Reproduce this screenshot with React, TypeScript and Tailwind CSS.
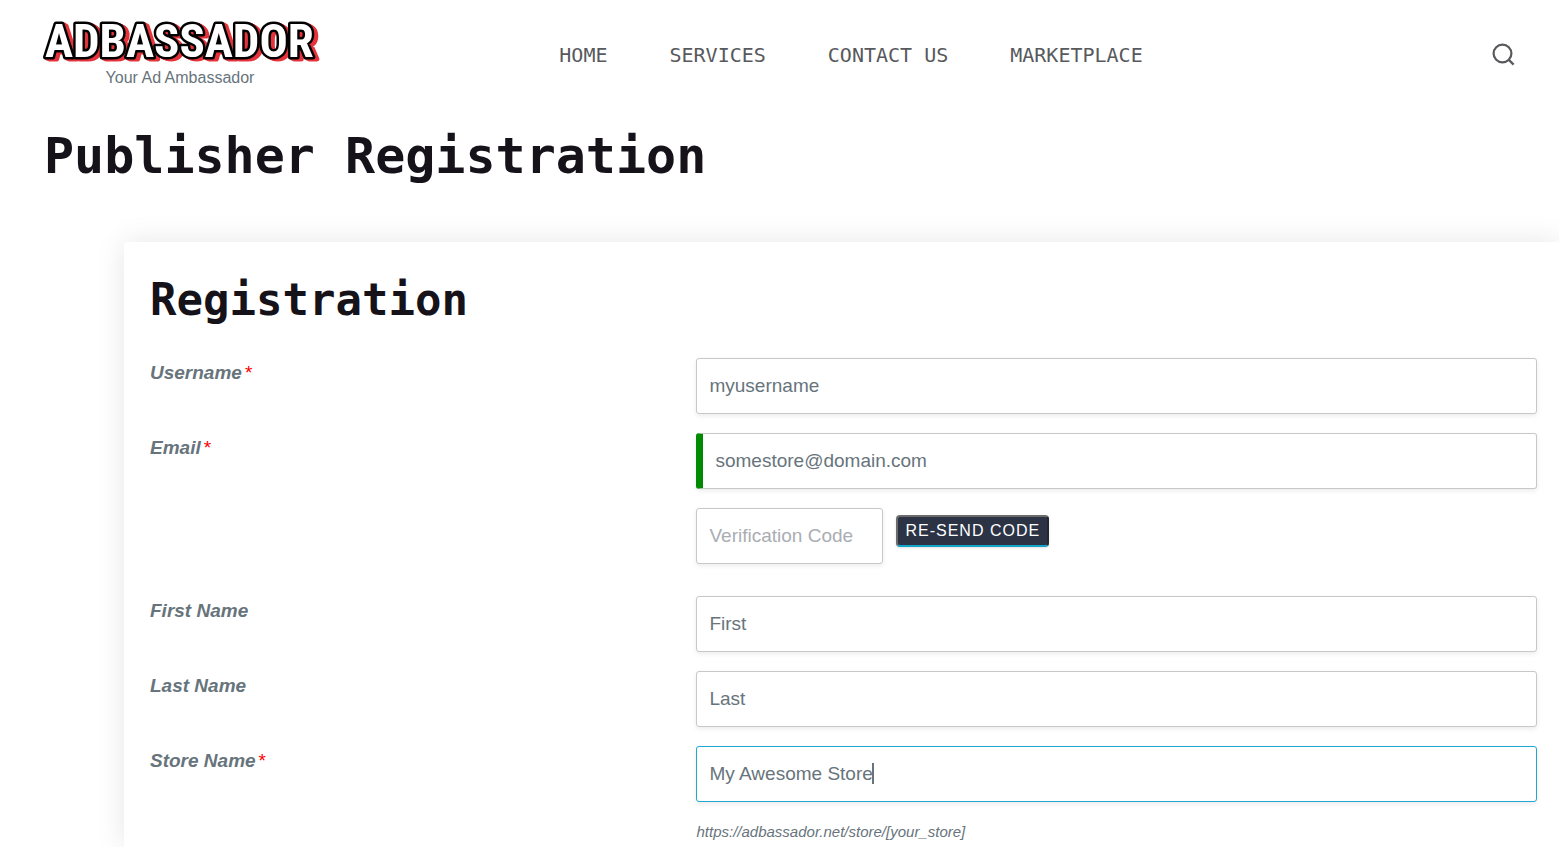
import React from "react";

const navLinks = ["HOME", "SERVICES", "CONTACT US", "MARKETPLACE"];

const inputClass =
  "block h-14 w-full rounded-[3px] border bg-white px-3 text-[19px] leading-6 text-[#67747c] shadow-[0_2px_5px_rgba(0,0,0,0.08)] outline-none placeholder:text-[#a9adb3]";

interface FieldRowProps {
  id: string;
  label: string;
  required?: boolean;
  children: React.ReactNode;
}

const FieldRow: React.FC<FieldRowProps> = ({ id, label, required, children }) => (
  <div className="grid grid-cols-[39.4%_1fr]">
    <label htmlFor={id} className="pt-[3px] text-[19px] leading-6">
      <span className="font-bold italic">{label}</span>
      {required && <span className="pl-[3px] text-[#ff0000]">*</span>}
    </label>
    <div>{children}</div>
  </div>
);

const Logo = () => (
  <a href="#" className="flex flex-col items-center">
    <svg
      width="274"
      height="54"
      viewBox="0 0 274 54"
      role="img"
      aria-label="Adbassador"
      className="overflow-visible [filter:drop-shadow(2px_1px_0_#e5333b)_drop-shadow(2px_1px_0_#e5333b)]"
    >
      <text
        x="2"
        y="45"
        fontFamily="'Liberation Sans Narrow', 'Roboto Condensed', sans-serif"
        fontWeight="bold"
        fontSize="47"
        fill="#fff"
        stroke="#000"
        strokeWidth="5"
        strokeLinejoin="round"
        paintOrder="stroke"
      >
        ADBASSADOR
      </text>
    </svg>
    <span className="text-base leading-6">Your Ad Ambassador</span>
  </a>
);

const Header = () => (
  <header className="flex items-start justify-between pl-[43px] pr-11 pt-3">
    <Logo />
    <nav className="flex gap-[62px] pt-[27px] font-['DejaVu_Sans_Mono',monospace] text-xl leading-8 text-[#58595d]">
      {navLinks.map((link) => (
        <a key={link} href="#">
          {link}
        </a>
      ))}
    </nav>
    {/* keeps the nav centred a little right of the middle */}
    <div className="flex w-[130px] justify-end pt-[30px]">
      <button type="button" aria-label="Search" className="text-[#58595d]">
        <svg width="24" height="24" viewBox="0 0 24 24" fill="none" stroke="currentColor" strokeWidth="2.2">
          <circle cx="11.5" cy="11.5" r="8.9" />
          <path d="M17.6 17.6 L22.6 22.6" />
        </svg>
      </button>
    </div>
  </header>
);

const App: React.FC = () => {
  return (
    <div className="flex min-h-screen flex-col overflow-hidden bg-white font-['Liberation_Sans',Arial,sans-serif] text-[#67747c]">
      <Header />

      <h1 className="pl-11 pt-[34px] font-['DejaVu_Sans_Mono',monospace] text-[50px] font-bold leading-[64px] text-[#15121a]">
        Publisher Registration
      </h1>

      <main className="flex flex-1 flex-col pl-[124px] pt-[54px]">
        <form className="flex-1 rounded-t-[3px] bg-white pl-[26px] pr-[22px] pt-7 shadow-[0_0_30px_rgba(0,0,0,0.1)]">
          <h2 className="font-['DejaVu_Sans_Mono',monospace] text-[44px] font-bold leading-[60px] text-[#15121a]">
            Registration
          </h2>

          <div className="flex flex-col gap-[19px] pt-7">
            <FieldRow id="username" label="Username" required>
              <input id="username" type="text" defaultValue="myusername" className={`${inputClass} border-[#c8c8c8]`} />
            </FieldRow>

            <FieldRow id="email" label="Email" required>
              <input
                id="email"
                type="email"
                defaultValue="somestore@domain.com"
                className={`${inputClass} border-l-[7px] border-[#c8c8c8] border-l-[#008a00]`}
              />
              <div className="flex items-start gap-[13px] pb-[13px] pt-[19px]">
                <div className="w-[187px]">
                  <input
                    type="text"
                    aria-label="Verification Code"
                    placeholder="Verification Code"
                    className={`${inputClass} border-[#c8c8c8]`}
                  />
                </div>
                <button
                  type="button"
                  className="mt-[7px] h-8 rounded border-2 border-b-[#12a5c9] border-l-[#6b6b6b] border-r-[#25272c] border-t-[#6b6b6b] bg-[#2b3345] px-[7px] text-base leading-6 tracking-[1px] text-white shadow-sm"
                >
                  RE-SEND CODE
                </button>
              </div>
            </FieldRow>

            <FieldRow id="first" label="First Name">
              <input id="first" type="text" defaultValue="First" className={`${inputClass} border-[#c8c8c8]`} />
            </FieldRow>

            <FieldRow id="last" label="Last Name">
              <input id="last" type="text" defaultValue="Last" className={`${inputClass} border-[#c8c8c8]`} />
            </FieldRow>

            <FieldRow id="store" label="Store Name" required>
              <div className="relative">
                <input
                  id="store"
                  type="text"
                  defaultValue="My Awesome Store"
                  className={`${inputClass} border-[#1fa9d0]`}
                />
                {/* text caret */}
                <span className="absolute left-[176px] top-[17px] h-[21px] w-0.5 bg-[#67747c]" />
              </div>
              <p className="pt-5 text-[15px] italic leading-5">https://adbassador.net/store/[your_store]</p>
            </FieldRow>
          </div>
        </form>
      </main>
    </div>
  );
};

export default App;
